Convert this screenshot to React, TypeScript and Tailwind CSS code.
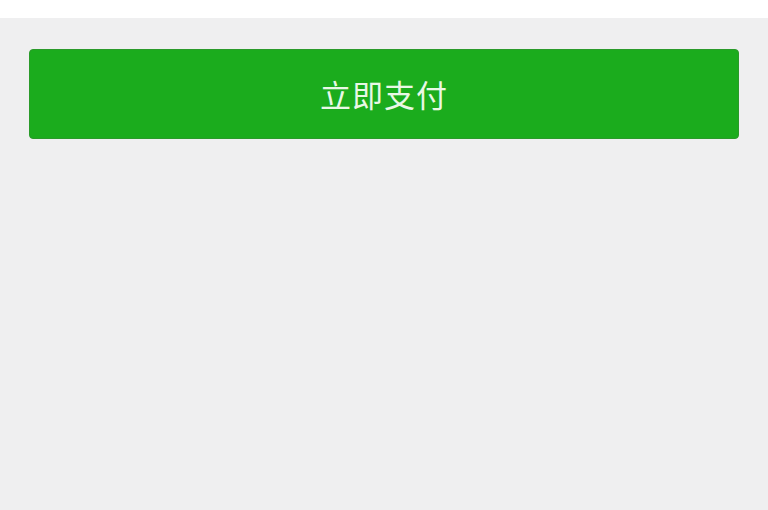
export default function App() {
  return (
    <div className="w-[768px] h-[510px] bg-[#efeff0] flex flex-col" style={{ fontFamily: '"Noto Sans CJK SC", "Noto Sans", sans-serif' }}>
      <div className="h-[18px] bg-white" />
      <div className="px-[29px] pt-[31px]">
        <button className="w-[710px] h-[90px] rounded-[4px] bg-[#1bac1d] border border-[#2a9a2a] flex items-center justify-center text-[31px] text-[#e9f8e6] tracking-[1px]">
          立即支付
        </button>
      </div>
    </div>
  );
}
